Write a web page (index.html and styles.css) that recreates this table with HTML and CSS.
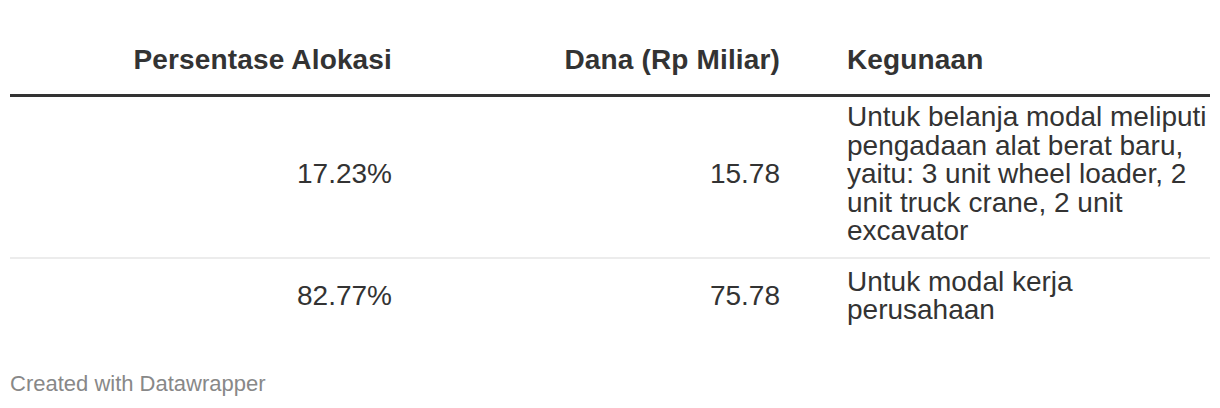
FILE: index.html
```html
<!DOCTYPE html>
<html lang="id">
<head>
<meta charset="utf-8">
<title>Alokasi Dana</title>
<link rel="stylesheet" href="styles.css">
</head>
<body>
<div class="chart">
  <div class="table">
    <div class="row head">
      <div class="cell c1">Persentase Alokasi</div>
      <div class="cell c2">Dana (Rp Miliar)</div>
      <div class="cell c3">Kegunaan</div>
    </div>
    <div class="row body first">
      <div class="cell c1">17.23%</div>
      <div class="cell c2">15.78</div>
      <div class="cell c3">Untuk belanja modal meliputi pengadaan alat berat baru, yaitu: 3 unit wheel loader, 2 unit truck crane, 2 unit excavator</div>
    </div>
    <div class="row body last">
      <div class="cell c1">82.77%</div>
      <div class="cell c2">75.78</div>
      <div class="cell c3">Untuk modal kerja perusahaan</div>
    </div>
  </div>
  <div class="footer">Created with Datawrapper</div>
</div>
</body>
</html>
```
FILE: styles.css
```css
html, body {
  margin: 0;
  padding: 0;
  background: #ffffff;
}

body {
  font-family: "Liberation Sans", Arial, Helvetica, sans-serif;
  color: #333333;
}

.chart {
  padding: 44px 10px 0 10px;
}

.row {
  display: grid;
  grid-template-columns: 392px 435px 1fr;
}

.cell.c1,
.cell.c2 {
  text-align: right;
}

.cell.c1 {
  padding-right: 10px;
}

.cell.c2 {
  padding-right: 57px;
}

.cell.c3 {
  padding-left: 10px;
}

.row.head {
  font-size: 28px;
  font-weight: bold;
  line-height: 32px;
  letter-spacing: 0.15px;
  border-bottom: 3px solid #333333;
  padding-bottom: 18px;
}

.row.body {
  font-size: 28px;
  line-height: 28.5px;
  align-items: center;
}

.row.body.first {
  padding: 6px 0 11px 0;
  border-bottom: 2px solid #ececec;
}

.row.body.last {
  padding: 9px 0 8px 0;
}

.footer {
  margin-top: 38px;
  font-size: 22px;
  line-height: 26px;
  color: #888888;
}
```
